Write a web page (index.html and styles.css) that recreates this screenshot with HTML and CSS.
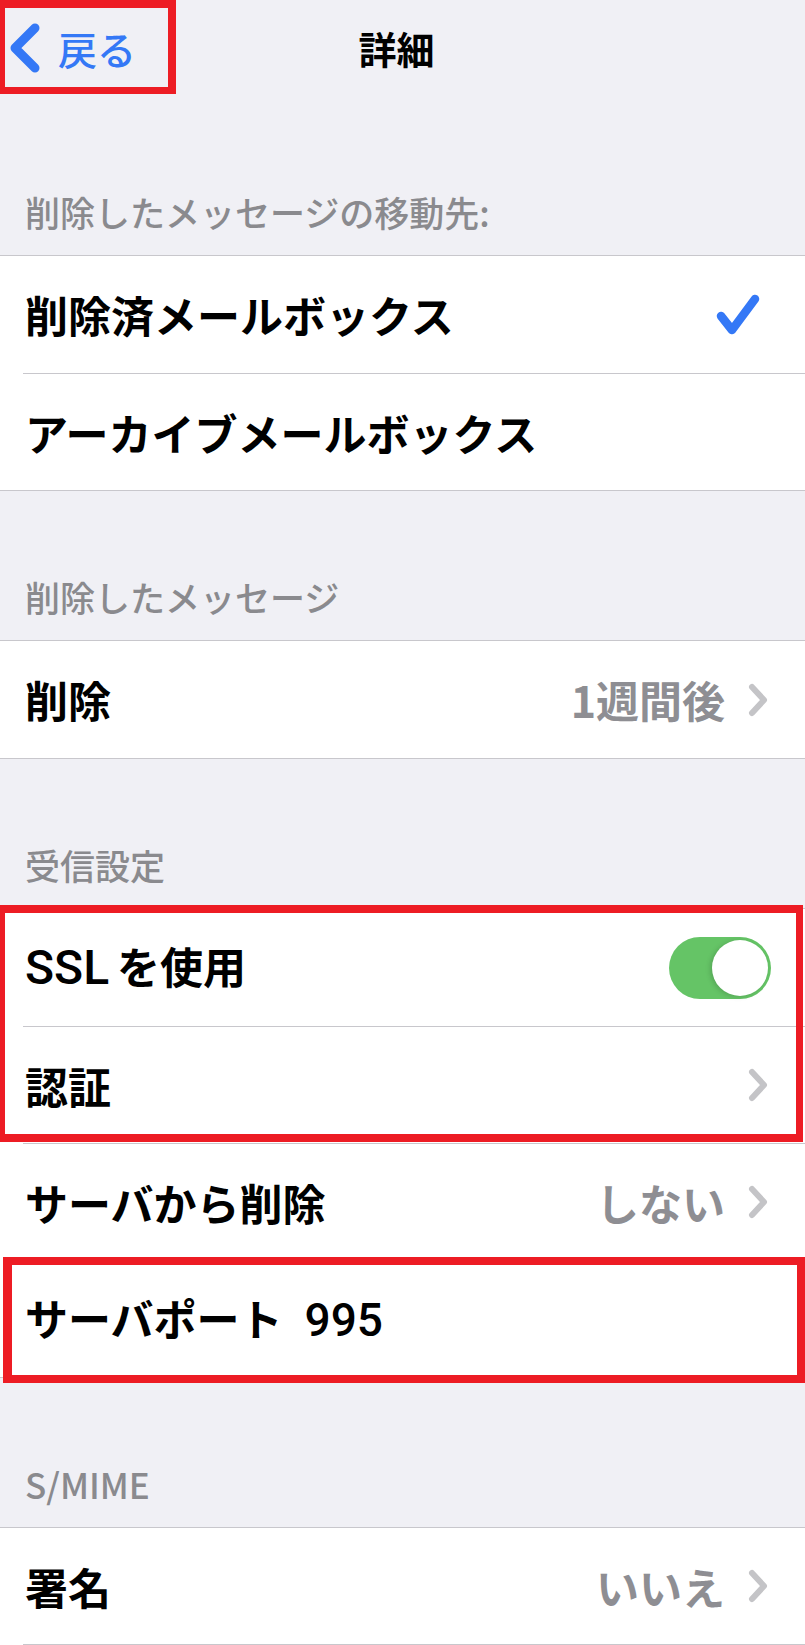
FILE: index.html
```html
<!DOCTYPE html>
<html lang="ja">
<head>
<meta charset="utf-8">
<title>詳細</title>
<link rel="stylesheet" href="styles.css">
</head>
<body>
<div class="page">
	<div class="navbar">
		<a class="back" href="#">
			<svg class="back-icon" viewBox="0 0 34 52"><path d="M27 6 L7 26 L27 46"/></svg>
			<span>戻る</span>
		</a>
		<h1 class="title">詳細</h1>
	</div>

	<div class="section-header">削除したメッセージの移動先:</div>
	<ul class="group">
		<li class="cell">
			<div class="cell-body">
				<span class="label">削除済メールボックス</span>
				<svg class="check" viewBox="0 0 44 42"><path d="M5 22 L16 36 L39 5"/></svg>
			</div>
		</li>
		<li class="cell">
			<div class="cell-body">
				<span class="label">アーカイブメールボックス</span>
			</div>
		</li>
	</ul>

	<div class="section-header">削除したメッセージ</div>
	<ul class="group">
		<li class="cell">
			<div class="cell-body">
				<span class="label">削除</span>
				<span class="value">1週間後</span>
				<svg class="chevron" viewBox="0 0 22 34"><path d="M5 4 L17 17 L5 30"/></svg>
			</div>
		</li>
	</ul>

	<div class="section-header">受信設定</div>
	<ul class="group">
		<li class="cell">
			<div class="cell-body">
				<span class="label"><span class="latin">SSL</span>を使用</span>
				<span class="switch"><span class="knob"></span></span>
			</div>
		</li>
		<li class="cell">
			<div class="cell-body">
				<span class="label">認証</span>
				<svg class="chevron push" viewBox="0 0 22 34"><path d="M5 4 L17 17 L5 30"/></svg>
			</div>
		</li>
		<li class="cell">
			<div class="cell-body">
				<span class="label">サーバから削除</span>
				<span class="value">しない</span>
				<svg class="chevron" viewBox="0 0 22 34"><path d="M5 4 L17 17 L5 30"/></svg>
			</div>
		</li>
		<li class="cell">
			<div class="cell-body">
				<span class="label">サーバポート<span class="port">995</span></span>
			</div>
		</li>
	</ul>

	<div class="section-header">S/MIME</div>
	<ul class="group group-open">
		<li class="cell">
			<div class="cell-body">
				<span class="label">署名</span>
				<span class="value">いいえ</span>
				<svg class="chevron" viewBox="0 0 22 34"><path d="M5 4 L17 17 L5 30"/></svg>
			</div>
		</li>
	</ul>

	<!-- 赤枠の注釈 -->
	<div class="mark mark-back"></div>
	<div class="mark mark-recv"></div>
	<div class="mark mark-port"></div>
</div>
</body>
</html>
```

FILE: styles.css
```css
* {
	box-sizing: border-box;
}

body {
	margin: 0;
	background: #f0f0f5;
	color: #000;
	font-family: "Noto Sans CJK JP", "Noto Sans", sans-serif;
}

.page {
	position: relative;
	width: 805px;
	height: 1645px;
	overflow: hidden;
}

/* ナビゲーションバー */
.navbar {
	display: grid;
	grid-template-columns: 1fr auto 1fr;
	align-items: center;
	height: 106px;
	padding-bottom: 10px;
}

.back {
	display: flex;
	align-items: center;
	padding-left: 8px;
	color: #3478f6;
	font-size: 39px;
	font-weight: 500;
	line-height: 1;
	text-decoration: none;
}

.back-icon {
	width: 34px;
	height: 52px;
	fill: none;
	stroke: #3478f6;
	stroke-width: 9;
	stroke-linecap: round;
	stroke-linejoin: round;
}

.back span {
	margin-left: 16px;
}

.title {
	margin: 0;
	padding-right: 12px;
	font-size: 38px;
	font-weight: 700;
	line-height: 1;
}

/* セクション */
.section-header {
	display: flex;
	align-items: flex-end;
	height: 149px;
	padding: 0 0 26px 25px;
	color: #8a8a8e;
	font-size: 35px;
	font-weight: 500;
	line-height: 1;
}

.group {
	margin: 0;
	padding: 0;
	list-style: none;
	background: #fff;
	border-top: 1px solid #c8c7cc;
	border-bottom: 1px solid #c8c7cc;
}

.cell {
	padding-left: 23px;
}

.cell-body {
	display: flex;
	align-items: center;
	height: 117px;
	padding: 0 36px 0 2px;
}

.cell + .cell .cell-body {
	border-top: 1px solid #c8c7cc;
}

/* 画面外へ続くグループ */
.group-open {
	border-bottom: 0;
}

.group-open .cell:last-child .cell-body {
	border-bottom: 1px solid #c8c7cc;
}

.label {
	font-size: 43px;
	font-weight: 700;
	line-height: 1;
}

.latin {
	margin-right: 8px;
	font-family: Roboto, "Noto Sans", sans-serif;
	font-size: 48px;
	font-weight: 500;
}

.port {
	margin-left: 22px;
	font-family: Roboto, "Noto Sans", sans-serif;
	font-size: 46px;
	font-weight: 500;
}

.value {
	margin-left: auto;
	margin-right: 22px;
	color: #8e8e93;
	font-size: 43px;
	font-weight: 700;
	line-height: 1;
}

.chevron {
	width: 22px;
	height: 34px;
	fill: none;
	stroke: #c4c4c7;
	stroke-width: 6;
	stroke-linecap: round;
	stroke-linejoin: round;
}

.chevron.push,
.check {
	margin-left: auto;
}

.check {
	width: 44px;
	height: 42px;
	margin-right: 9px;
	fill: none;
	stroke: #3478f6;
	stroke-width: 8.5;
	stroke-linecap: round;
	stroke-linejoin: round;
}

/* トグルスイッチ */
.switch {
	display: flex;
	justify-content: flex-end;
	align-items: center;
	width: 102px;
	height: 62px;
	margin-left: auto;
	margin-right: -2px;
	padding: 3px;
	border-radius: 31px;
	background: #65c466;
}

.knob {
	width: 56px;
	height: 56px;
	border-radius: 50%;
	background: #fff;
	box-shadow: -2px 1px 5px rgba(0, 0, 0, 0.15);
}

/* 赤枠 */
.mark {
	position: absolute;
	border: 8px solid #ed1c24;
}

.mark-back {
	left: 0;
	top: 0;
	width: 176px;
	height: 94px;
	border-width: 8px 8px 7px 5px;
}

.mark-recv {
	left: 0;
	top: 905px;
	width: 803px;
	height: 237px;
	border-width: 8px 7px 8px 5px;
}

.mark-port {
	left: 3px;
	top: 1257px;
	width: 802px;
	height: 126px;
	border-width: 8px 8px 8px 9px;
}
```
